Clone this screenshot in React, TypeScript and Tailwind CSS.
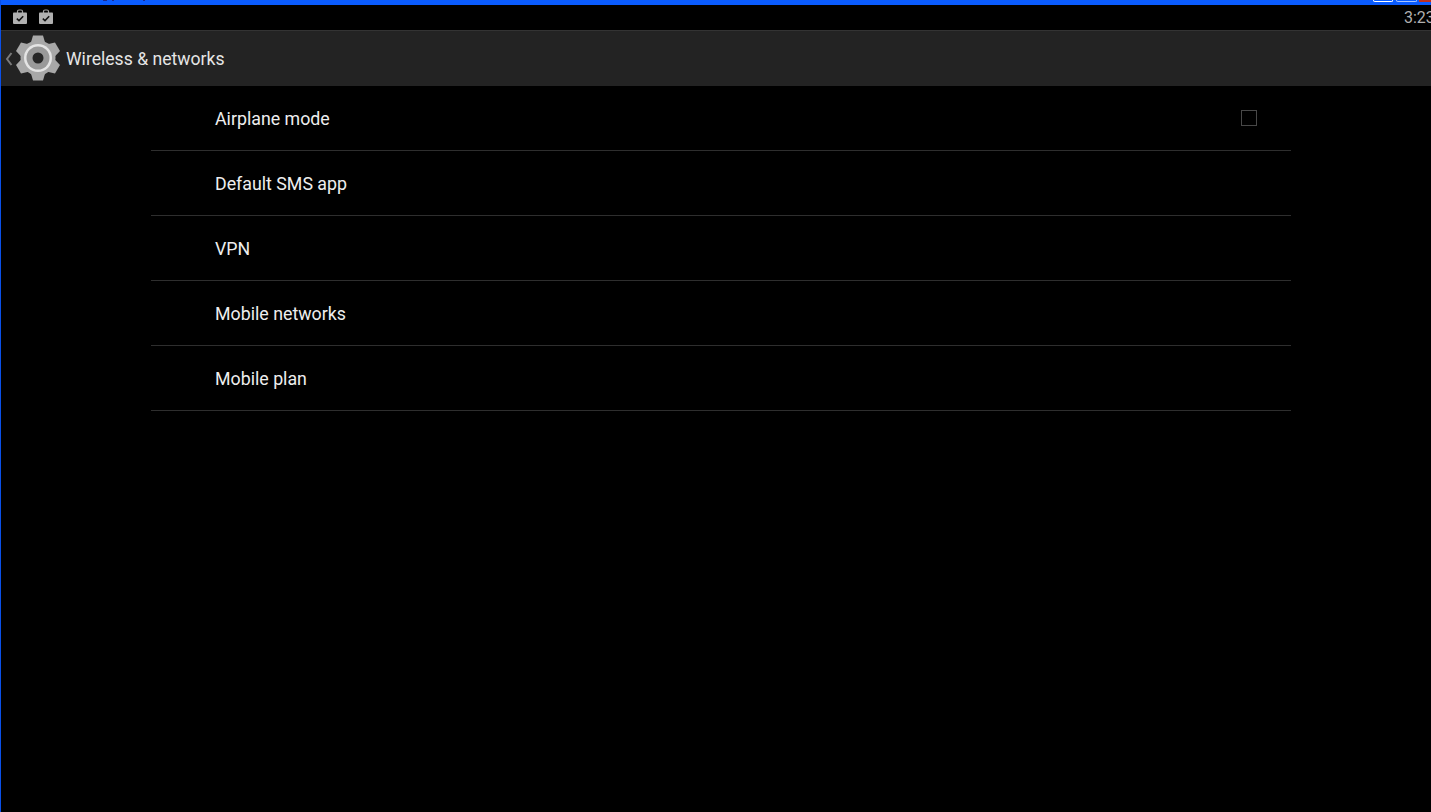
import React from "react";

function Bag() {
  return (
    <svg width="16" height="16" viewBox="0 0 16 16" className="block">
      <path d="M5.5 4V2.3Q5.5 1 7 1H9Q10.5 1 10.5 2.3V4" fill="none" stroke="#a0a0a0" strokeWidth="1.2" />
      <path d="M1 4.2Q1 3.5 1.8 3.5H14.2Q15 3.5 15 4.2V14Q15 15 14 15H2Q1 15 1 14Z" fill="#b0b0b0" />
      <path d="M4.8 9.6L7 11.6L11.2 7.2" fill="none" stroke="#111" strokeWidth="1.5" />
    </svg>
  );
}

function Gear() {
  const teeth = [0, 60, 120, 180, 240, 300];
  return (
    <svg width="46" height="46" viewBox="0 0 46 46" className="block">
      <circle cx="23" cy="23" r="17.5" fill="#a8a8a8" />
      {teeth.map((a) => (
        <path key={a} d="M18 0.5H28L30.5 9H15.5Z" fill="#a8a8a8" transform={`rotate(${a} 23 23)`} />
      ))}
      <circle cx="23" cy="23" r="14" fill="#e4e4e4" />
      <circle cx="23" cy="23" r="11.5" fill="#999999" />
      <circle cx="23" cy="23" r="5.5" fill="#262626" />
    </svg>
  );
}

const items = ["Airplane mode", "Default SMS app", "VPN", "Mobile networks", "Mobile plan"];

export default function App() {
  return (
    <div className="relative h-[812px] w-[1431px] overflow-hidden bg-black font-['Roboto',sans-serif] flex flex-col border-l border-[#0a50e8]">
      <div className="relative h-[5px] shrink-0 bg-[#0a5cff]">
        <span className="absolute left-[102px] top-0 w-[4px] h-[1px] bg-[#1a2a90]" />
        <span className="absolute left-[111px] top-0 w-[2px] h-[1px] bg-[#1a2a90]" />
        <span className="absolute left-[142px] top-0 w-[2px] h-[1px] bg-[#1a2a90]" />
        <span className="absolute left-[1372px] top-0 w-[20px] h-[2px] rounded-b-[2px] border-b border-x border-white" />
        <span className="absolute left-[1395px] top-0 w-[21px] h-[2px] rounded-b-[2px] border-b border-x border-[#a8c4ff]" />
        <span className="absolute left-[1418px] top-0 w-[13px] h-[2px] bg-[#c03020]" />
      </div>
      <div className="h-[25px] shrink-0 flex items-center pl-[11px] justify-between">
        <div className="flex gap-[10px] -mt-[2px]">
          <Bag />
          <Bag />
        </div>
        <span className="text-[16px] text-[#b0b0b0] whitespace-nowrap w-[27px] overflow-hidden">3:23</span>
      </div>
      <div className="h-[56px] shrink-0 bg-[#232323] border-t border-[#333333] flex items-center">
        <svg width="8" height="14" viewBox="0 0 8 14" className="ml-[4px] block">
          <path d="M6.5 1L2 7L6.5 13" fill="none" stroke="#7a7a7a" strokeWidth="2" />
        </svg>
        <div className="ml-[2px] -mt-[2px]">
          <Gear />
        </div>
        <span className="ml-[5px] pt-[2px] text-[17.6px] text-[#e6e6e6]">Wireless &amp; networks</span>
      </div>
      <div className="ml-[150px] w-[1140px]">
        {items.map((t, i) => (
          <div key={t} className="h-[65px] border-b border-[#2e2e2e] pl-[64px] pr-[34px] flex items-center justify-between">
            <span className="pt-[2px] text-[17.8px] text-[#eeeeee]">{t}</span>
            {i === 0 && <span className="w-4 h-4 border border-[#484848]" />}
          </div>
        ))}
      </div>
    </div>
  );
}
